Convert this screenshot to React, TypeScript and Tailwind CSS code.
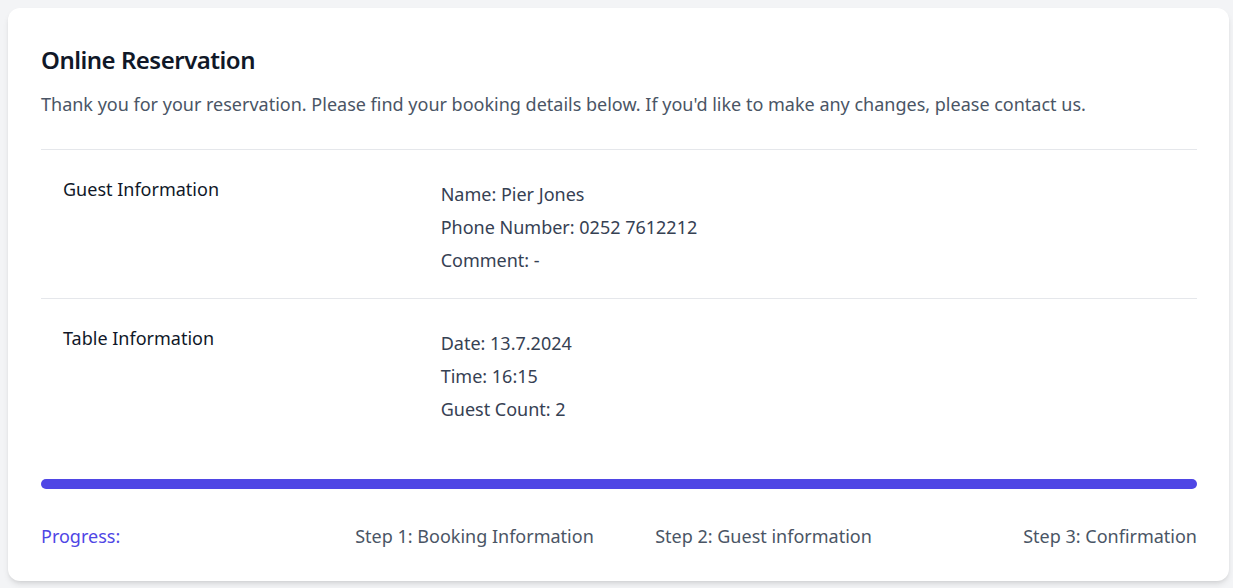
import React from "react";

const font = { fontFamily: '"Noto Sans", "Open Sans", sans-serif' };

function Row({ label, values }: { label: string; values: string[] }) {
  return (
    <div className="grid grid-cols-3 gap-4 px-6 py-6 border-t border-gray-200">
      <div className="-ml-0.5 mt-px text-lg leading-7 text-gray-900">{label}</div>
      <div className="col-span-2 mt-[6px] flex flex-col gap-[5px] text-lg leading-7 text-gray-700 pl-px">
        {values.map((v) => (
          <p key={v}>{v}</p>
        ))}
      </div>
    </div>
  );
}

export default function App() {
  return (
    <div className="min-h-[588px] bg-gray-100 pt-2 pl-2" style={font}>
      <div className="w-[1221px] rounded-xl bg-white pl-[33px] pr-8 pt-9 pb-[31px] shadow-md">
        <h1 className="text-2xl leading-8 font-semibold tracking-[-0.5px] text-gray-900">Online Reservation</h1>
        <p className="mt-[14px] text-lg leading-7 text-gray-600">
          Thank you for your reservation. Please find your booking details below. If you'd like to make any changes, please contact us.
        </p>
        <div className="mt-[31px]">
          <Row label="Guest Information" values={["Name: Pier Jones", "Phone Number: 0252 7612212", "Comment: -"]} />
          <Row label="Table Information" values={["Date: 13.7.2024", "Time: 16:15", "Guest Count: 2"]} />
        </div>
        <div className="mt-8">
          <div className="h-2.5 w-full rounded-full bg-[#4f46e5]" />
          <div className="mt-[33px] grid grid-cols-4 text-lg leading-7 text-gray-600">
            <div className="text-[#4f46e5]">Progress:</div>
            <div className="text-center">Step 1: Booking Information</div>
            <div className="text-center">Step 2: Guest information</div>
            <div className="text-right">Step 3: Confirmation</div>
          </div>
        </div>
      </div>
    </div>
  );
}
